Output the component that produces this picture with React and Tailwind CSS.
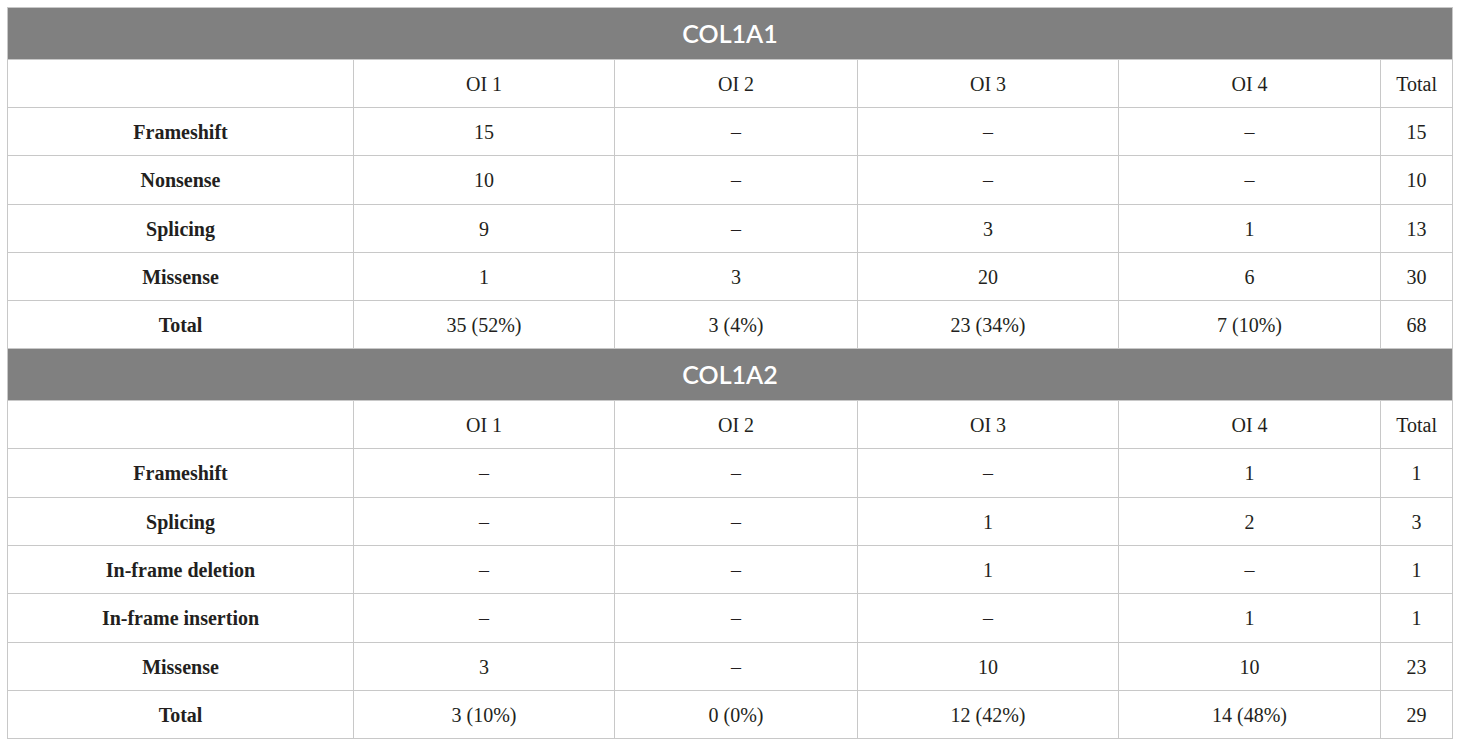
import React from "react";

const cols = ["w-[346px]", "w-[261px]", "w-[243px]", "w-[261px]", "w-[262px]", "w-[72px]"];

const t1 = [
  ["Frameshift", "15", "–", "–", "–", "15"],
  ["Nonsense", "10", "–", "–", "–", "10"],
  ["Splicing", "9", "–", "3", "1", "13"],
  ["Missense", "1", "3", "20", "6", "30"],
  ["Total", "35 (52%)", "3 (4%)", "23 (34%)", "7 (10%)", "68"],
];
const t2 = [
  ["Frameshift", "–", "–", "–", "1", "1"],
  ["Splicing", "–", "–", "1", "2", "3"],
  ["In-frame deletion", "–", "–", "1", "–", "1"],
  ["In-frame insertion", "–", "–", "–", "1", "1"],
  ["Missense", "3", "–", "10", "10", "23"],
  ["Total", "3 (10%)", "0 (0%)", "12 (42%)", "14 (48%)", "29"],
];

const H48 = "h-[48px]";
const H49 = "h-[49px]";

function Section({ title, rows, heights }) {
  return (
    <>
      <tr>
        <td
          colSpan={6}
          className="h-[52px] bg-[#808080] border border-[#c8c8c8] text-center text-white text-[25px] font-semibold font-['Lato','Open_Sans',sans-serif]"
        >
          {title}
        </td>
      </tr>
      <tr className={heights[0]}>
        <td className="border border-[#c8c8c8]"></td>
        {["OI 1", "OI 2", "OI 3", "OI 4", "Total"].map((h) => (
          <td key={h} className="border border-[#c8c8c8] text-center">
            {h}
          </td>
        ))}
      </tr>
      {rows.map((r, i) => (
        <tr key={i} className={heights[i + 1]}>
          {r.map((c, j) => (
            <td
              key={j}
              className={
                j === 0
                  ? "border border-[#c8c8c8] text-center font-bold"
                  : "border border-[#c8c8c8] text-center"
              }
            >
              {c}
            </td>
          ))}
        </tr>
      ))}
    </>
  );
}

export default function App() {
  return (
    <div className="w-[1460px] h-[746px] bg-white pt-[7px] pl-[7px]">
      <table className="w-[1446px] table-fixed border-collapse text-[20px] text-[#231f20] font-['Liberation_Serif','DejaVu_Serif',serif]">
        <colgroup>
          {cols.map((w, i) => (
            <col key={i} className={w} />
          ))}
        </colgroup>
        <tbody>
          <Section title="COL1A1" rows={t1} heights={[H48, H48, H49, H48, H48, H48]} />
          <Section title="COL1A2" rows={t2} heights={[H48, H49, H48, H48, H49, H48, H48]} />
        </tbody>
      </table>
    </div>
  );
}
